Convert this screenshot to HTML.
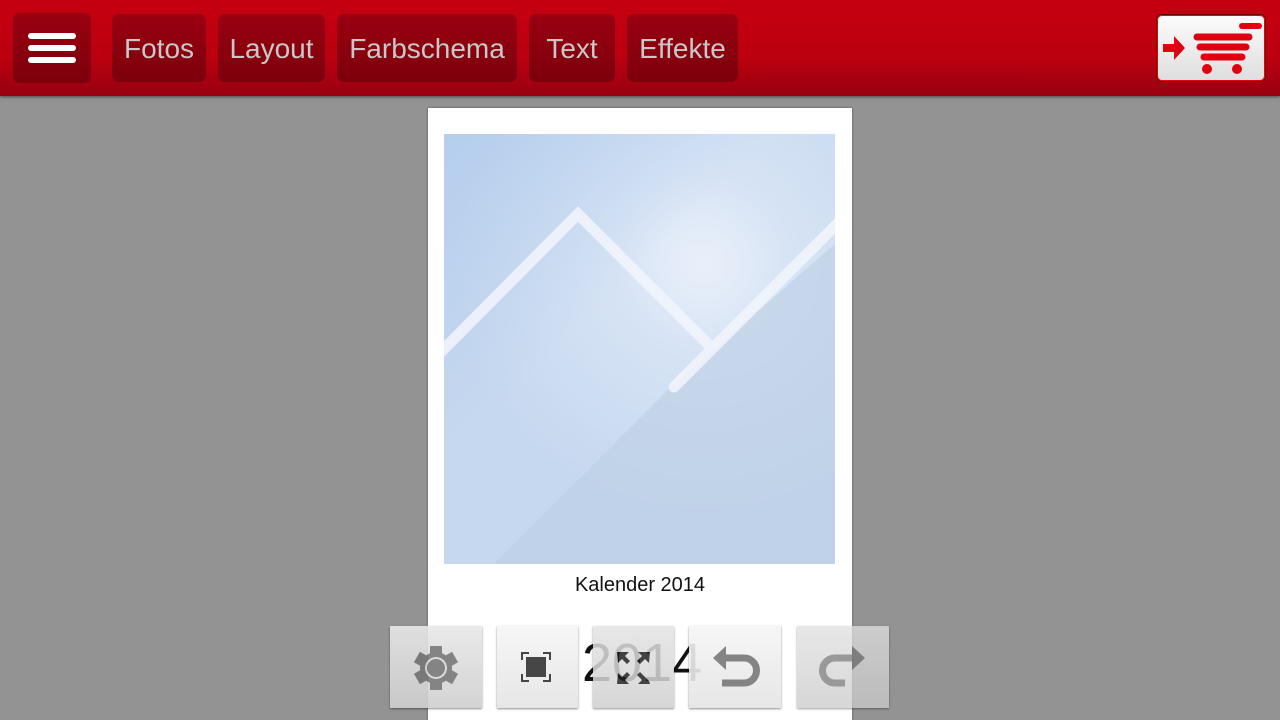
<!DOCTYPE html><html><head><style>
html,body{margin:0;width:1280px;height:720px;overflow:hidden}
body{background:#939393;font-family:"Liberation Sans",sans-serif;position:relative}
.hdr{position:absolute;left:0;top:0;width:1280px;height:96px;background:linear-gradient(#c50010,#bb000f 60%,#960010);box-shadow:0 1px 3px rgba(0,0,0,.5)}
.b{position:absolute;top:14px;height:68px;border-radius:7px;background:linear-gradient(#9a0010,#7c000c);color:#c8c8c8;font-size:28px;line-height:70px;text-align:center}
.page{position:absolute;left:428px;top:108px;width:424px;height:612px;background:#fff;box-shadow:0 0 2px rgba(0,0,0,.5)}
.tb{position:absolute;top:626px;height:82px;background:linear-gradient(#f6f6f6,#e4e4e4);opacity:.9;box-shadow:0 1px 2px rgba(0,0,0,.5)}
</style></head><body>
<div class="hdr">
<div class="b" style="left:13px;top:13px;width:78px;height:70px"><div style="position:absolute;left:15px;top:20px;width:48px;height:6px;background:#fff;border-radius:3px"></div><div style="position:absolute;left:15px;top:32px;width:48px;height:6px;background:#fff;border-radius:3px"></div><div style="position:absolute;left:15px;top:44px;width:48px;height:6px;background:#fff;border-radius:3px"></div></div>
<div class="b" style="left:112px;width:94px">Fotos</div>
<div class="b" style="left:218px;width:107px">Layout</div>
<div class="b" style="left:337px;width:180px">Farbschema</div>
<div class="b" style="left:529px;width:86px">Text</div>
<div class="b" style="left:627px;width:111px">Effekte</div>
<div style="position:absolute;left:1156px;top:14px;width:108px;height:66px;border:1px solid #600;border-radius:6px;background:linear-gradient(#fcfcfc,#dedede);box-shadow:inset 0 0 0 1px #e00">
<svg width="108" height="66" style="position:absolute;left:0;top:0"><g fill="#e00010" stroke="#e00010" stroke-linecap="round"><path d="M6 29h11v-8l11 12-11 12v-8H6z" stroke="none"/><line x1="85" y1="11" x2="102" y2="11" stroke-width="6"/><line x1="40" y1="22" x2="92" y2="22" stroke-width="7"/><line x1="43" y1="32" x2="89" y2="32" stroke-width="7"/><line x1="47" y1="42" x2="85" y2="42" stroke-width="7"/><circle cx="50" cy="54" r="5" stroke="none"/><circle cx="80" cy="54" r="5" stroke="none"/></g></svg></div>
</div>
<div class="page">
<div style="position:absolute;left:16px;top:26px;width:391px;height:430px;overflow:hidden;background:radial-gradient(circle at 260px 130px,#eaf0fa 0,#d6e3f5 90px,#c6d8ef 250px),#c6d8ef">
<div style="position:absolute;left:0;top:0;width:391px;height:430px;background:linear-gradient(135deg,rgba(170,200,235,.6),rgba(0,0,0,0) 40%)"></div>
<svg width="391" height="430" style="position:absolute;left:0;top:0"><polygon points="391,110 391,430 50,430 230,250" fill="#bccfe5" opacity=".6"/><path d="M-10 225 L134 80 L268 214 M230 253 L400 83" stroke="#f2f5fb" stroke-width="11" fill="none" stroke-linecap="round" opacity=".85"/></svg>
</div>
<div style="position:absolute;left:0;top:466px;width:424px;text-align:center;font-size:20px;color:#111">Kalender 2014</div>
<div style="position:absolute;left:154px;top:524px;font-size:54px;color:#111">2014</div>
</div>
<div class="tb" style="left:390px;width:92px;background:linear-gradient(#e8e8e8,#cfcfcf)"><svg width="92" height="82"><g transform="translate(46,42)"><circle r="16" fill="#777"/><g fill="#777"><rect x="-6" y="-22" width="12" height="44"/><rect x="-6" y="-22" width="12" height="44" transform="rotate(60)"/><rect x="-6" y="-22" width="12" height="44" transform="rotate(120)"/></g><circle r="11" fill="#d8d8d8"/><circle r="9" fill="#777"/></g></svg></div>
<div class="tb" style="left:497px;width:81px"><svg width="81" height="82"><rect x="29" y="31" width="20" height="20" fill="#333"/><path d="M25 34v-7h7M46 27h7v7M53 48v7h-7M32 55h-7v-7" stroke="#333" stroke-width="2" fill="none"/></svg></div>
<div class="tb" style="left:593px;width:81px;background:linear-gradient(#e4e4e4,#d0d0d0);opacity:.85"><svg width="81" height="82"><g fill="#222"><path d="M24 26h12l-4 4 5 5-3 3-5-5-4 4z"/><path d="M57 26h-12l4 4-5 5 3 3 5-5 4 4z"/><path d="M24 58h12l-4-4 5-5-3-3-5 5-4-4z"/><path d="M57 58h-12l4-4-5-5 3-3 5 5 4 4z"/></g></svg></div>
<div class="tb" style="left:689px;width:92px"><svg width="92" height="82"><path d="M34 32h21a12 12 0 0 1 0 25h-22" stroke="#777" stroke-width="7" fill="none"/><path d="M24 32l13-12v24z" fill="#777"/></svg></div>
<div class="tb" style="left:797px;width:92px;background:linear-gradient(#e0e0e0,#cacaca);opacity:.75"><svg width="92" height="82"><path d="M56 32h-18a12 12 0 0 0 0 25h10" stroke="#777" stroke-width="7" fill="none"/><path d="M68 32l-13-12v24z" fill="#777"/></svg></div>
</body></html>
